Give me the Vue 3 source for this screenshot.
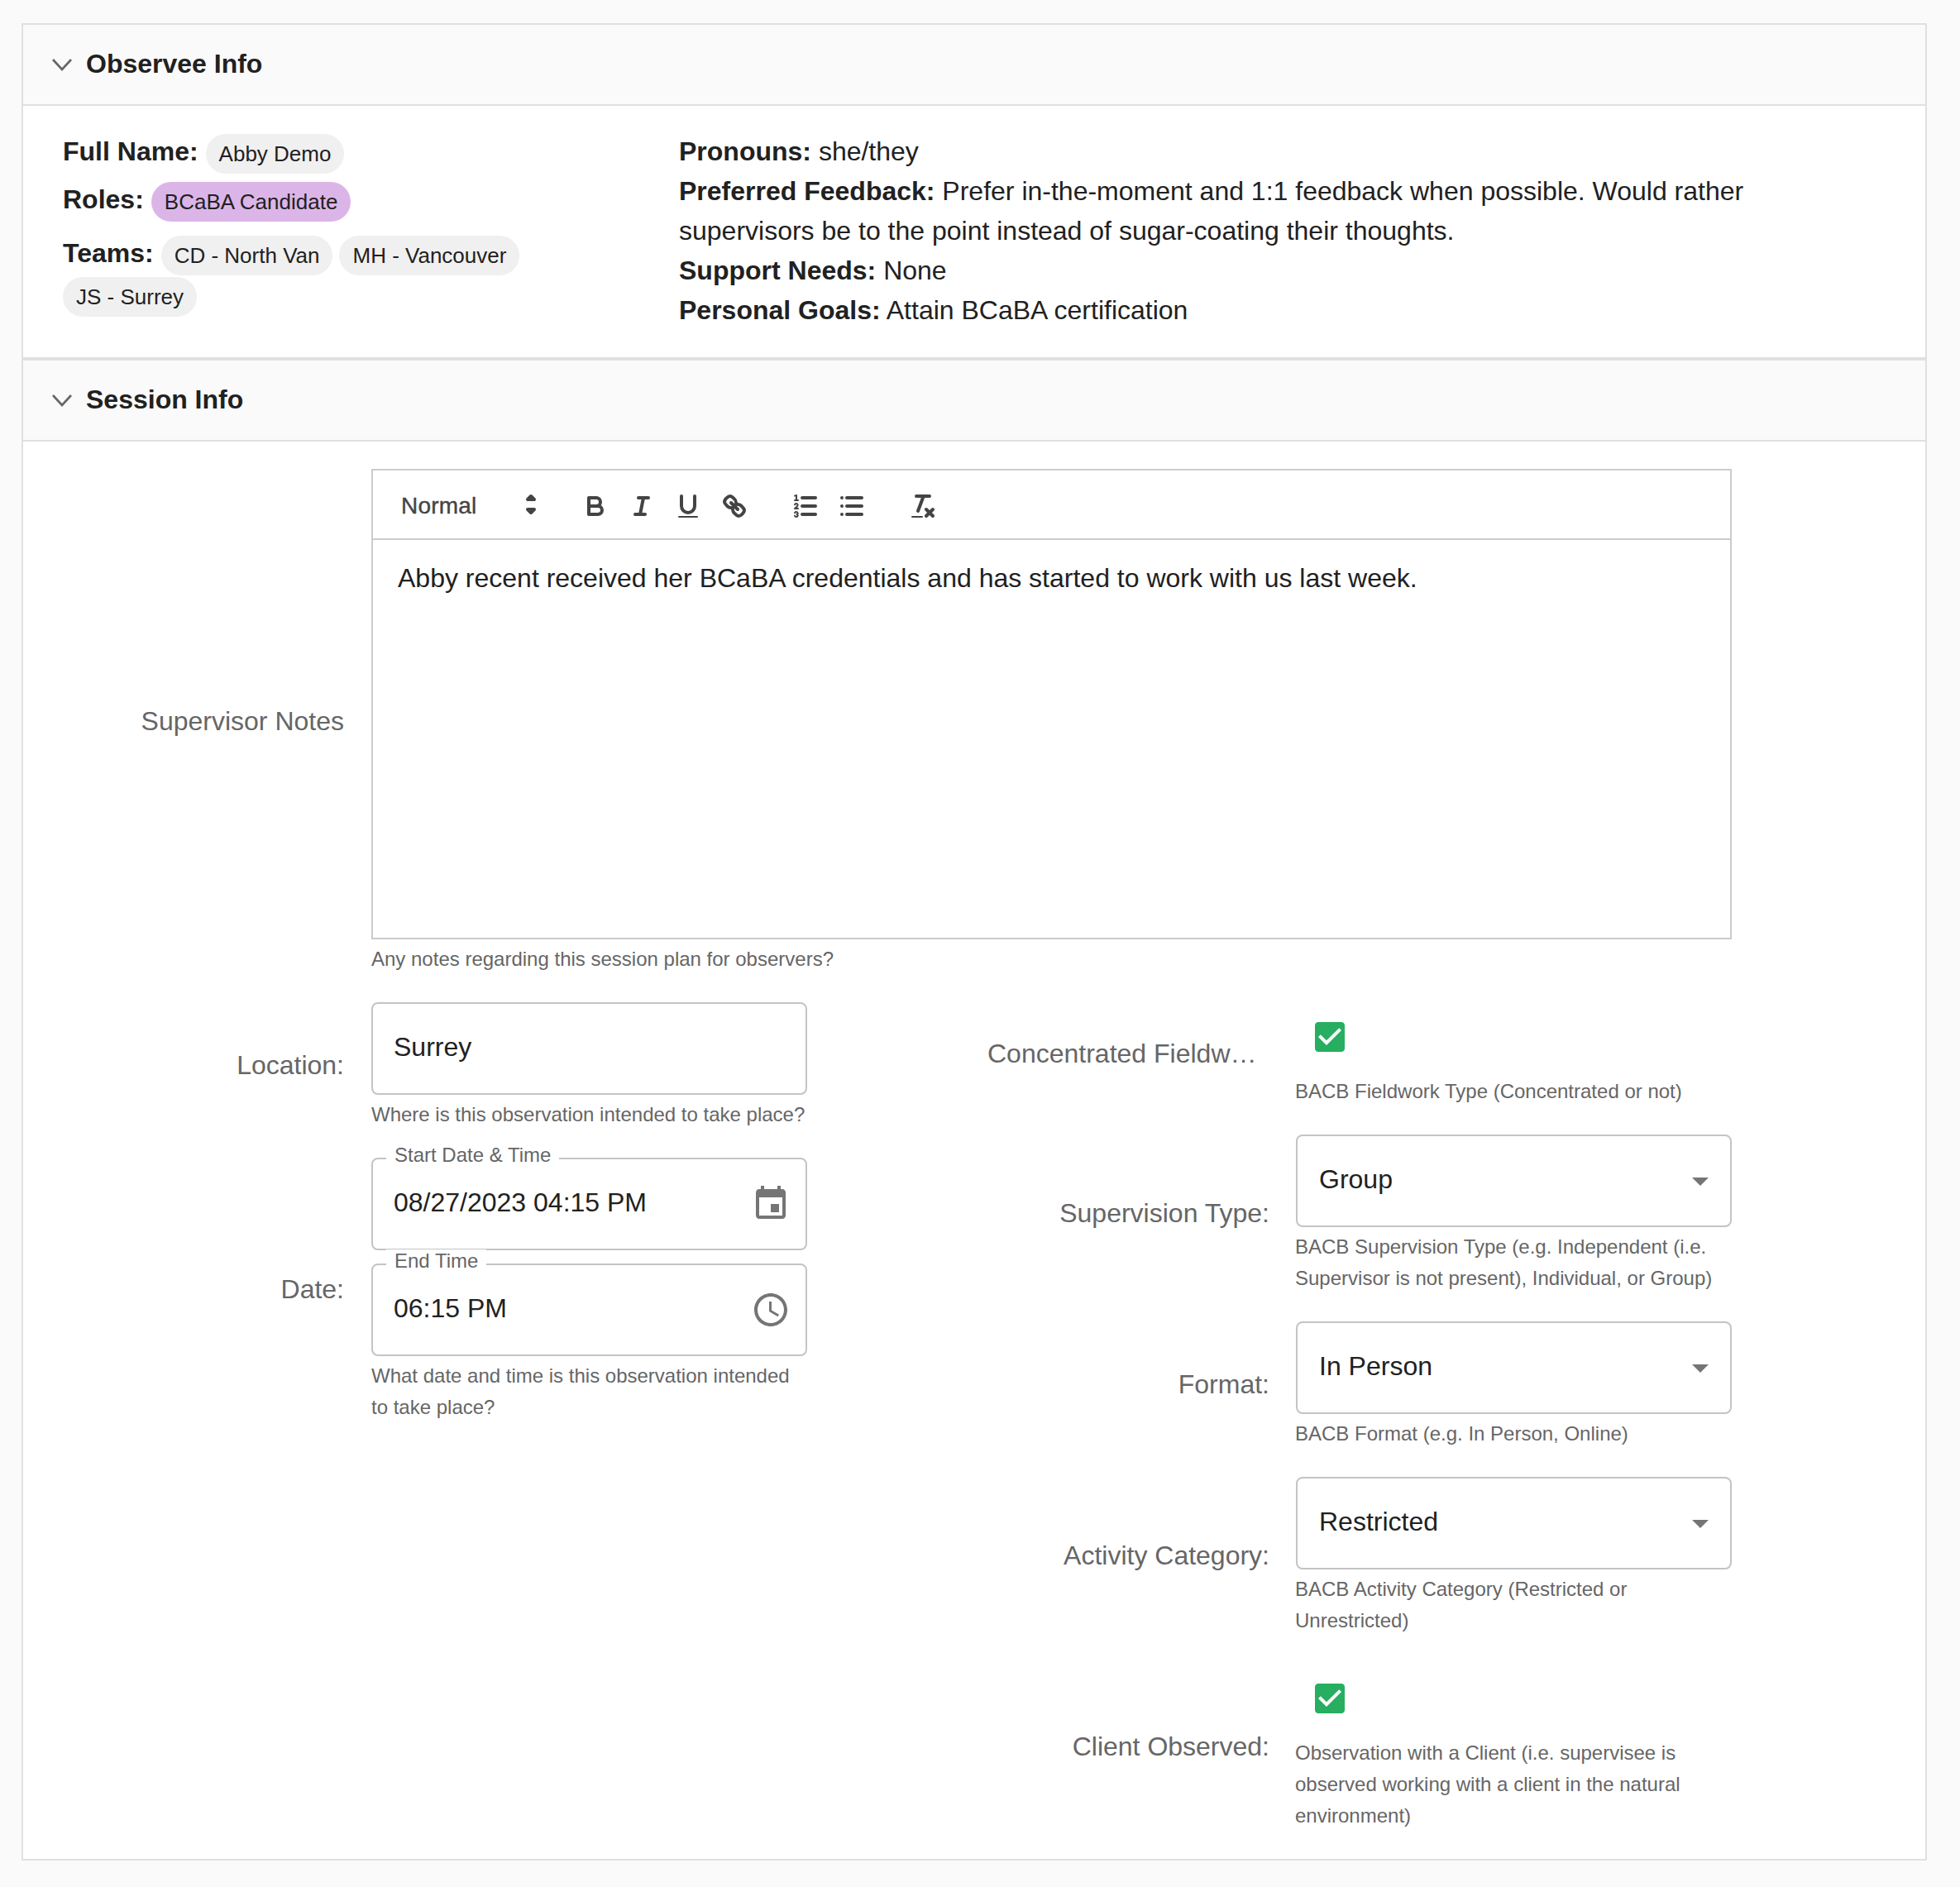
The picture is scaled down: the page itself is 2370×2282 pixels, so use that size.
<template>
  <div class="page">
    <div class="card">
      <div class="section-header">
        <svg class="chevron" viewBox="0 0 26 16"><polyline points="2,2 13,14 24,2" /></svg>
        <h2>Observee Info</h2>
      </div>
      <div class="observee-body">
        <div class="observee-left">
          <div class="chip-row">
            <span class="info-label">Full Name:</span>
            <span class="chip">Abby Demo</span>
          </div>
          <div class="chip-row roles">
            <span class="info-label">Roles:</span>
            <span class="chip purple">BCaBA Candidate</span>
          </div>
          <div class="chip-row teams">
            <span class="info-label">Teams:</span>
            <span v-for="team in teams" :key="team" class="chip">{{ team }}</span>
          </div>
        </div>
        <div class="observee-right">
          <div><b>Pronouns:</b> she/they</div>
          <div><b>Preferred Feedback:</b> Prefer in-the-moment and 1:1 feedback when possible. Would rather supervisors be to the point instead of sugar-coating their thoughts.</div>
          <div><b>Support Needs:</b> None</div>
          <div><b>Personal Goals:</b> Attain BCaBA certification</div>
        </div>
      </div>

      <div class="section-header session">
        <svg class="chevron" viewBox="0 0 26 16"><polyline points="2,2 13,14 24,2" /></svg>
        <h2>Session Info</h2>
      </div>
      <div class="session-body">
        <div class="field notes-field">
          <label class="field-label">Supervisor Notes</label>
          <div class="notes-control">
            <div class="editor">
              <div class="toolbar">
                <div class="picker">
                  <span>Normal</span>
                  <svg class="ql-icon picker-arrows" viewBox="0 0 18 18">
                    <polygon points="7 11 9 13 11 11 7 11" />
                    <polygon points="7 5 9 3 11 5 7 5" />
                  </svg>
                </div>
                <div class="tool-group">
                  <span class="tool">
                    <svg class="ql-icon" viewBox="0 0 18 18">
                      <path d="M5,4H9.5A2.5,2.5,0,0,1,12,6.5v0A2.5,2.5,0,0,1,9.5,9H5A0,0,0,0,1,5,9V4A0,0,0,0,1,5,4Z" />
                      <path d="M5,9h5.5A2.5,2.5,0,0,1,13,11.5v0A2.5,2.5,0,0,1,10.5,14H5a0,0,0,0,1,0,0V9A0,0,0,0,1,5,9Z" />
                    </svg>
                  </span>
                  <span class="tool">
                    <svg class="ql-icon" viewBox="0 0 18 18">
                      <line x1="7" x2="13" y1="4" y2="4" />
                      <line x1="5" x2="11" y1="14" y2="14" />
                      <line x1="8" x2="10" y1="14" y2="4" />
                    </svg>
                  </span>
                  <span class="tool">
                    <svg class="ql-icon" viewBox="0 0 18 18">
                      <path d="M5,3V9a4.012,4.012,0,0,0,4,4H9a4.012,4.012,0,0,0,4-4V3" />
                      <rect class="fill" height="1" rx="0.5" ry="0.5" width="12" x="3" y="15" />
                    </svg>
                  </span>
                  <span class="tool">
                    <svg class="ql-icon" viewBox="0 0 18 18">
                      <line x1="7" x2="11" y1="7" y2="11" />
                      <path d="M8.9,4.577a3.476,3.476,0,0,1,.36,4.679A3.476,3.476,0,0,1,4.577,8.9C3.185,7.5,2.035,6.4,4.217,4.217S7.5,3.185,8.9,4.577Z" />
                      <path d="M13.423,9.1a3.476,3.476,0,0,0-4.679-.36,3.476,3.476,0,0,0,.36,4.679c1.392,1.392,2.5,2.542,4.679.36S14.815,10.5,13.423,9.1Z" />
                    </svg>
                  </span>
                </div>
                <div class="tool-group">
                  <span class="tool">
                    <svg class="ql-icon" viewBox="0 0 18 18">
                      <line x1="7" x2="15" y1="4" y2="4" />
                      <line x1="7" x2="15" y1="9" y2="9" />
                      <line x1="7" x2="15" y1="14" y2="14" />
                      <line class="thin" x1="2.5" x2="4.5" y1="5.5" y2="5.5" />
                      <path class="fill" d="M3.5,6A0.5,0.5,0,0,1,3,5.5V3.085l-0.276.138A0.5,0.5,0,0,1,2.053,3c-0.124-.247-0.023-0.324.224-0.447l1-.5A0.5,0.5,0,0,1,4,2.5v3A0.5,0.5,0,0,1,3.5,6Z" />
                      <path class="thin" d="M4.5,10.5h-2c0-.234,1.85-1.076,1.85-2.234A0.959,0.959,0,0,0,2.5,8.156" />
                      <path class="thin" d="M2.5,14.846a0.959,0.959,0,0,0,1.85-.109A0.7,0.7,0,0,0,3.75,14a0.688,0.688,0,0,0,.6-0.736,0.959,0.959,0,0,0-1.85-.109" />
                    </svg>
                  </span>
                  <span class="tool">
                    <svg class="ql-icon" viewBox="0 0 18 18">
                      <line x1="6" x2="15" y1="4" y2="4" />
                      <line x1="6" x2="15" y1="9" y2="9" />
                      <line x1="6" x2="15" y1="14" y2="14" />
                      <line x1="3" x2="3" y1="4" y2="4" />
                      <line x1="3" x2="3" y1="9" y2="9" />
                      <line x1="3" x2="3" y1="14" y2="14" />
                    </svg>
                  </span>
                </div>
                <div class="tool-group">
                  <span class="tool">
                    <svg class="ql-icon" viewBox="0 0 18 18">
                      <line x1="5" x2="13" y1="3" y2="3" />
                      <line x1="6" x2="9.35" y1="12" y2="3" />
                      <line x1="11" x2="15" y1="11" y2="15" />
                      <line x1="15" x2="11" y1="11" y2="15" />
                      <rect class="fill" height="1" rx="0.5" ry="0.5" width="7" x="2" y="15" />
                    </svg>
                  </span>
                </div>
              </div>
              <div class="editor-text">Abby recent received her BCaBA credentials and has started to work with us last week.</div>
            </div>
            <p class="helper notes-helper">Any notes regarding this session plan for observers?</p>
          </div>
        </div>

        <div class="form-grid">
          <div class="form-col left-col">
            <div class="field">
              <label class="field-label">Location:</label>
              <div class="control">
                <div class="input"><span class="value">Surrey</span></div>
                <p class="helper">Where is this observation intended to take place?</p>
              </div>
            </div>
            <div class="field">
              <label class="field-label">Date:</label>
              <div class="control">
                <div class="input">
                  <span class="float-label">Start Date &amp; Time</span>
                  <span class="value">08/27/2023 04:15 PM</span>
                  <svg class="adorn" viewBox="0 0 24 24"><path d="M17 12h-5v5h5v-5zM16 1v2H8V1H6v2H5c-1.11 0-1.99.9-1.99 2L3 19c0 1.1.89 2 2 2h14c1.1 0 2-.9 2-2V5c0-1.1-.9-2-2-2h-1V1h-2zm3 18H5V8h14v11z" /></svg>
                </div>
                <div class="input second">
                  <span class="float-label">End Time</span>
                  <span class="value">06:15 PM</span>
                  <svg class="adorn" viewBox="0 0 24 24">
                    <path d="M11.99 2C6.47 2 2 6.48 2 12s4.47 10 9.99 10C17.52 22 22 17.52 22 12S17.52 2 11.99 2zM12 20c-4.42 0-8-3.58-8-8s3.58-8 8-8 8 3.58 8 8-3.58 8-8 8z" />
                    <path d="M12.5 7H11v6l5.25 3.15.75-1.23-4.5-2.67z" />
                  </svg>
                </div>
                <p class="helper">What date and time is this observation intended to take place?</p>
              </div>
            </div>
          </div>

          <div class="form-col right-col">
            <div v-for="item in rightFields" :key="item.label" class="field">
              <label class="field-label">{{ item.label }}</label>
              <div class="control">
                <div v-if="item.checked" class="check-wrap">
                  <svg class="check" viewBox="0 0 24 24"><path d="M19 3H5c-1.11 0-2 .9-2 2v14c0 1.1.89 2 2 2h14c1.11 0 2-.9 2-2V5c0-1.1-.89-2-2-2zm-9 14l-5-5 1.41-1.41L10 14.17l7.59-7.59L19 8l-9 9z" /></svg>
                </div>
                <div v-else class="input">
                  <span class="value">{{ item.value }}</span>
                  <svg class="select-arrow" viewBox="0 0 24 24"><path d="M7 10l5 5 5-5z" /></svg>
                </div>
                <p class="helper">{{ item.help }}</p>
              </div>
            </div>
          </div>
        </div>
      </div>
    </div>
  </div>
</template>

<script setup>
const teams = ['CD - North Van', 'MH - Vancouver', 'JS - Surrey']

const rightFields = [
  { label: 'Concentrated Fieldwork:', checked: true, help: 'BACB Fieldwork Type (Concentrated or not)' },
  { label: 'Supervision Type:', value: 'Group', help: 'BACB Supervision Type (e.g. Independent (i.e. Supervisor is not present), Individual, or Group)' },
  { label: 'Format:', value: 'In Person', help: 'BACB Format (e.g. In Person, Online)' },
  { label: 'Activity Category:', value: 'Restricted', help: 'BACB Activity Category (Restricted or Unrestricted)' },
  { label: 'Client Observed:', checked: true, help: 'Observation with a Client (i.e. supervisee is observed working with a client in the natural environment)' }
]
</script>

<style>
body {
  background: #fafafa;
}
</style>

<style scoped>
.page {
  box-sizing: border-box;
  width: 2370px;
  height: 2282px;
  padding: 28px 40px 0 26px;
  background: #fafafa;
  font-family: "Liberation Sans", Arial, sans-serif;
  color: #212121;
}

.card {
  border: 2px solid #e0e0e0;
  background: #fff;
}

.section-header {
  display: flex;
  align-items: center;
  height: 96px;
  padding-left: 34px;
  background: #fafafa;
  border-bottom: 2px solid #e0e0e0;
}

.section-header.session {
  border-top: 4px solid #e0e0e0;
}

.section-header h2 {
  margin: 0 0 2px 16px;
  font-size: 32px;
  font-weight: 700;
}

.chevron {
  width: 26px;
  height: 16px;
}

.chevron polyline {
  fill: none;
  stroke: #666;
  stroke-width: 2.6;
}

.observee-body {
  display: flex;
  padding: 0 0 33px 48px;
}

.observee-left {
  box-sizing: border-box;
  width: 745px;
  padding: 34px 44px 0 0;
}

.observee-right {
  flex: 1;
  padding: 31px 100px 0 0;
  font-size: 32px;
  line-height: 48px;
}

.chip-row {
  display: flex;
  flex-wrap: wrap;
  align-items: flex-start;
  gap: 2px 8px;
}

.chip-row.roles {
  margin-top: 10px;
}

.chip-row.teams {
  margin-top: 17px;
}

.info-label {
  margin-right: 1px;
  font-size: 32px;
  font-weight: 700;
  line-height: 42px;
}

.chip {
  height: 48px;
  padding: 0 16px;
  border-radius: 24px;
  background: #f0f0f0;
  font-size: 26px;
  line-height: 48px;
}

.chip.purple {
  background: #dcb5e8;
}

.session-body {
  padding: 33px 0 33px 48px;
}

.field {
  display: flex;
  align-items: center;
  gap: 33px;
}

.notes-field {
  margin-bottom: 33px;
}

.field-label {
  flex: none;
  width: 340px;
  padding-bottom: 3px;
  overflow: hidden;
  color: #666;
  font-size: 32px;
  line-height: 48px;
  text-align: right;
  white-space: nowrap;
  text-overflow: ellipsis;
}

.notes-control {
  width: 1645px;
}

.editor {
  box-sizing: border-box;
  height: 569px;
  border: 2px solid #ccc;
}

.toolbar {
  box-sizing: border-box;
  display: flex;
  align-items: center;
  height: 84px;
  padding: 4px 0 0 16px;
  border-bottom: 2px solid #ccc;
  color: #444;
}

.picker {
  position: relative;
  box-sizing: border-box;
  display: flex;
  align-items: center;
  width: 195px;
  margin-right: 30px;
  padding-left: 18px;
  font-size: 28px;
  letter-spacing: 0.2px;
  -webkit-text-stroke: 0.4px #444;
}

.picker-arrows {
  position: absolute;
  top: -2px;
  right: 2px;
}

.tool-group {
  display: flex;
  margin-right: 30px;
}

.tool {
  display: flex;
  align-items: center;
  justify-content: center;
  width: 56px;
  height: 48px;
}

.ql-icon {
  width: 36px;
  height: 36px;
}

.ql-icon * {
  fill: none;
  stroke: #444;
  stroke-width: 2;
  stroke-linecap: round;
  stroke-linejoin: round;
}

.ql-icon .thin {
  stroke-width: 1;
}

.ql-icon .fill {
  fill: #444;
  stroke: none;
}

.editor-text {
  padding: 22px 30px;
  font-size: 32px;
  line-height: 48px;
}

.helper {
  margin: 5px 0 0;
  color: #666;
  font-size: 24px;
  line-height: 38px;
}

.notes-helper {
  margin-top: 5px;
}

.form-grid {
  display: flex;
  justify-content: space-between;
  width: 2018px;
}

.form-col {
  display: flex;
  flex-direction: column;
  gap: 33px;
}

.left-col .control {
  width: 527px;
}

.right-col .field {
  gap: 32px;
}

.right-col .field-label {
  width: 341px;
}

.right-col .control {
  width: 527px;
}

.right-col .helper {
  margin-left: -1px;
}

.input {
  position: relative;
  box-sizing: border-box;
  display: flex;
  align-items: center;
  justify-content: space-between;
  height: 112px;
  padding: 0 14px 0 25px;
  border: 2px solid #c4c4c4;
  border-radius: 8px;
  font-size: 32px;
}

.right-col .input {
  padding-left: 26px;
}

.value {
  margin-bottom: 4px;
}

.input.second {
  margin-top: 16px;
}

.float-label {
  position: absolute;
  top: -19px;
  left: 16px;
  padding: 0 10px;
  background: #fff;
  color: #666;
  font-size: 24px;
  line-height: 28px;
}

.adorn {
  width: 48px;
  height: 48px;
  margin-right: 4px;
  fill: #757575;
}

.select-arrow {
  width: 48px;
  height: 48px;
  margin-right: -2px;
  fill: #757575;
}

.check-wrap {
  box-sizing: border-box;
  height: 84px;
  padding: 18px 18px 18px 17px;
}

.check {
  display: block;
  width: 48px;
  height: 48px;
  fill: #27ae60;
}
</style>
